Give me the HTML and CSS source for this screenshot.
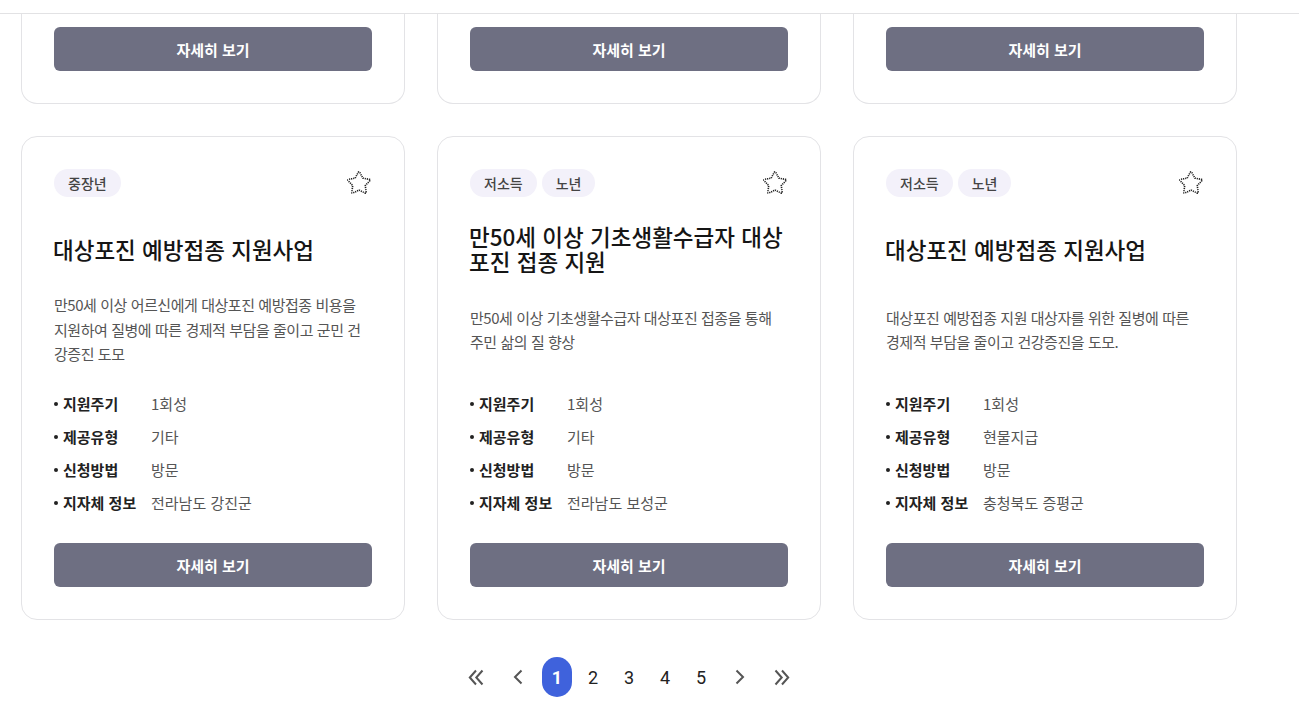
FILE: index.html
```html
<!DOCTYPE html>
<html lang="ko">
<head>
<meta charset="utf-8">
<title>지원사업 목록</title>
<link rel="stylesheet" href="styles.css">
</head>
<body>
<header class="topbar"></header>
<main class="content">
  <section class="grid">
    <div class="card card--partial"><a class="btn" href="#">자세히 보기</a></div>
    <div class="card card--partial"><a class="btn" href="#">자세히 보기</a></div>
    <div class="card card--partial"><a class="btn" href="#">자세히 보기</a></div>

    <article class="card">
      <div class="card-top">
        <div class="chips"><span class="chip">중장년</span></div>
        <svg class="star" viewBox="0 0 28 28"><path d="M13.22 3.43 Q14 2 14.78 3.43 L17.88 9.16 L24.29 10.34 Q25.89 10.64 24.77 11.82 L20.28 16.54 L21.14 22.99 Q21.35 24.61 19.88 23.91 L14 21.1 L8.12 23.91 Q6.65 24.61 6.86 22.99 L7.72 16.54 L3.23 11.82 Q2.11 10.64 3.71 10.34 L10.12 9.16 Z"/></svg>
      </div>
      <div class="title-box"><h3 class="title">대상포진 예방접종 지원사업</h3></div>
      <div class="desc-box"><p class="desc">만50세 이상 어르신에게 대상포진 예방접종 비용을 지원하여 질병에 따른 경제적 부담을 줄이고 군민 건강증진 도모</p></div>
      <ul class="info">
        <li><span class="label">지원주기</span><span class="value">1회성</span></li>
        <li><span class="label">제공유형</span><span class="value">기타</span></li>
        <li><span class="label">신청방법</span><span class="value">방문</span></li>
        <li><span class="label">지자체 정보</span><span class="value">전라남도 강진군</span></li>
      </ul>
      <a class="btn" href="#">자세히 보기</a>
    </article>

    <article class="card">
      <div class="card-top">
        <div class="chips"><span class="chip">저소득</span><span class="chip">노년</span></div>
        <svg class="star" viewBox="0 0 28 28"><path d="M13.22 3.43 Q14 2 14.78 3.43 L17.88 9.16 L24.29 10.34 Q25.89 10.64 24.77 11.82 L20.28 16.54 L21.14 22.99 Q21.35 24.61 19.88 23.91 L14 21.1 L8.12 23.91 Q6.65 24.61 6.86 22.99 L7.72 16.54 L3.23 11.82 Q2.11 10.64 3.71 10.34 L10.12 9.16 Z"/></svg>
      </div>
      <div class="title-box"><h3 class="title">만50세 이상 기초생활수급자 대상포진 접종 지원</h3></div>
      <div class="desc-box"><p class="desc">만50세 이상 기초생활수급자 대상포진 접종을 통해 주민 삶의 질 향상</p></div>
      <ul class="info">
        <li><span class="label">지원주기</span><span class="value">1회성</span></li>
        <li><span class="label">제공유형</span><span class="value">기타</span></li>
        <li><span class="label">신청방법</span><span class="value">방문</span></li>
        <li><span class="label">지자체 정보</span><span class="value">전라남도 보성군</span></li>
      </ul>
      <a class="btn" href="#">자세히 보기</a>
    </article>

    <article class="card">
      <div class="card-top">
        <div class="chips"><span class="chip">저소득</span><span class="chip">노년</span></div>
        <svg class="star" viewBox="0 0 28 28"><path d="M13.22 3.43 Q14 2 14.78 3.43 L17.88 9.16 L24.29 10.34 Q25.89 10.64 24.77 11.82 L20.28 16.54 L21.14 22.99 Q21.35 24.61 19.88 23.91 L14 21.1 L8.12 23.91 Q6.65 24.61 6.86 22.99 L7.72 16.54 L3.23 11.82 Q2.11 10.64 3.71 10.34 L10.12 9.16 Z"/></svg>
      </div>
      <div class="title-box"><h3 class="title">대상포진 예방접종 지원사업</h3></div>
      <div class="desc-box"><p class="desc">대상포진 예방접종 지원 대상자를 위한 질병에 따른 경제적 부담을 줄이고 건강증진을 도모.</p></div>
      <ul class="info">
        <li><span class="label">지원주기</span><span class="value">1회성</span></li>
        <li><span class="label">제공유형</span><span class="value">현물지급</span></li>
        <li><span class="label">신청방법</span><span class="value">방문</span></li>
        <li><span class="label">지자체 정보</span><span class="value">충청북도 증평군</span></li>
      </ul>
      <a class="btn" href="#">자세히 보기</a>
    </article>
  </section>

  <nav class="pager">
    <a class="pg pg--arrow" href="#"><svg width="16" height="17" viewBox="0 0 16 17"><path d="M8 1.5 L1.8 8.5 L8 15.5 M14.5 1.5 L8.3 8.5 L14.5 15.5"/></svg></a>
    <a class="pg pg--arrow" href="#"><svg width="10" height="16" viewBox="0 0 10 16"><path d="M8.5 1.5 L2 8 L8.5 14.5"/></svg></a>
    <a class="pg pg--active" href="#">1</a>
    <a class="pg" href="#">2</a>
    <a class="pg" href="#">3</a>
    <a class="pg" href="#">4</a>
    <a class="pg" href="#">5</a>
    <a class="pg pg--arrow" href="#"><svg width="10" height="16" viewBox="0 0 10 16"><path d="M1.5 1.5 L8 8 L1.5 14.5"/></svg></a>
    <a class="pg pg--arrow" href="#"><svg width="16" height="17" viewBox="0 0 16 17"><path d="M1.5 1.5 L7.7 8.5 L1.5 15.5 M8 1.5 L14.2 8.5 L8 15.5"/></svg></a>
  </nav>
</main>
</body>
</html>
```

FILE: styles.css
```css
* { box-sizing: border-box; }

body {
  margin: 0;
  background: #ffffff;
  font-family: "Noto Sans CJK KR", "Noto Sans", sans-serif;
  color: #222;
}

.topbar {
  height: 14px;
  border-bottom: 1px solid #e2e2e4;
}

.content {
  width: 1237px;
  padding-left: 21px;
}

.grid {
  display: grid;
  grid-template-columns: repeat(3, 384px);
  column-gap: 32px;
  row-gap: 32px;
}

.card {
  display: flex;
  flex-direction: column;
  border: 1px solid #e3e3e6;
  border-radius: 16px;
  padding: 32px;
  background: #fff;
}

.card--partial {
  border-top: none;
  border-top-left-radius: 0;
  border-top-right-radius: 0;
  padding-top: 13px;
}

.card-top {
  display: flex;
  justify-content: space-between;
  align-items: center;
  height: 28px;
}

.chips {
  display: flex;
  gap: 5px;
}

.chip {
  height: 28px;
  line-height: 28px;
  padding: 0 14px;
  border-radius: 14px;
  background: #f3f1fa;
  color: #444;
  font-size: 14px;
  font-weight: 500;
}

.star {
  width: 28px;
  height: 28px;
  margin-right: -1px;
}

.star path {
  fill: none;
  stroke: #222;
  stroke-width: 1.6;
  stroke-dasharray: 1.2 0.9;
  stroke-linejoin: round;
}

.title-box {
  margin-top: 16px;
  height: 72px;
  display: flex;
  align-items: center;
}

.title {
  margin: 0 0 0 -1px;
  font-size: 22.5px;
  line-height: 25px;
  font-weight: 500;
  color: #151515;
}

.desc-box {
  margin-top: 8px;
  height: 74px;
  display: flex;
  align-items: center;
}

.desc {
  margin: 0;
  font-size: 15px;
  letter-spacing: -0.45px;
  line-height: 24.5px;
  color: #555;
}

.info {
  list-style: none;
  margin: 20px 0 0;
  padding: 0;
}

.info li {
  display: flex;
  align-items: center;
  height: 33px;
  font-size: 15px;
}

.info li::before {
  content: "";
  width: 4px;
  height: 4px;
  border-radius: 50%;
  background: #222;
  margin-right: 5px;
}

.label {
  width: 88px;
  font-weight: 700;
  color: #222;
}

.value {
  color: #555;
}

.btn {
  margin-top: 24px;
  height: 44px;
  display: flex;
  align-items: center;
  justify-content: center;
  background: #6e6f82;
  border-radius: 6px;
  color: #fff;
  font-size: 15px;
  font-weight: 700;
  text-decoration: none;
}

.card--partial .btn {
  margin-top: 0;
}

.pager {
  display: flex;
  justify-content: center;
  gap: 6px;
  margin-top: 37px;
}

.pg {
  width: 30px;
  height: 40px;
  display: flex;
  align-items: center;
  justify-content: center;
  font-family: Roboto, "Liberation Sans", sans-serif;
  font-size: 18px;
  color: #222;
  text-decoration: none;
}

.pg--arrow {
  width: 36px;
}

.pg--arrow path {
  fill: none;
  stroke: #555;
  stroke-width: 2;
}

.pg--active {
  background: #3f62dc;
  color: #fff;
  font-weight: 700;
  border-radius: 15px;
}
```
